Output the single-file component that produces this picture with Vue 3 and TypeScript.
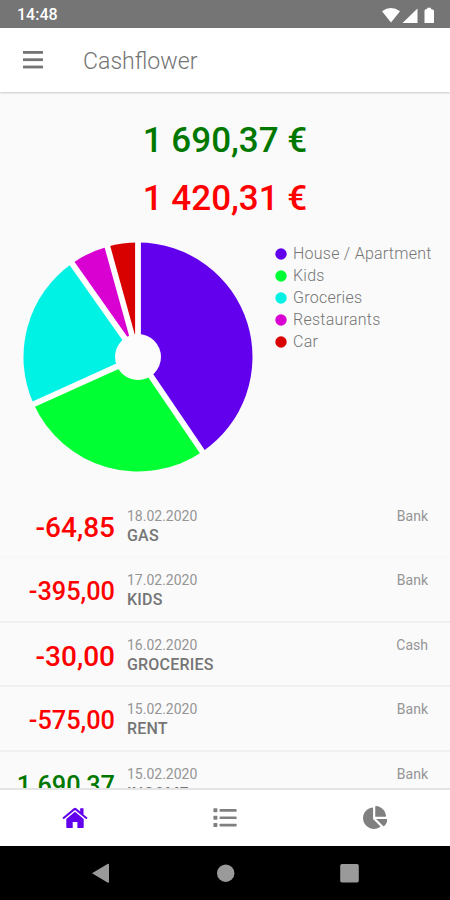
<script setup lang="ts">
interface Slice {
  label: string
  color: string
  start: number
  end: number
}

interface Entry {
  amount: string
  date: string
  title: string
  account: string
  income?: boolean
  compact?: boolean
}

const slices: Slice[] = [
  { label: 'House / Apartment', color: '#6200ee', start: 0, end: 145.8 },
  { label: 'Kids', color: '#00ff33', start: 145.8, end: 245.7 },
  { label: 'Groceries', color: '#00f2e4', start: 245.7, end: 324.8 },
  { label: 'Restaurants', color: '#d900d2', start: 324.8, end: 344.5 },
  { label: 'Car', color: '#d90000', start: 344.5, end: 360 },
]

const entries: Entry[] = [
  { amount: '-64,85', date: '18.02.2020', title: 'GAS', account: 'Bank' },
  { amount: '-395,00', date: '17.02.2020', title: 'KIDS', account: 'Bank', compact: true },
  { amount: '-30,00', date: '16.02.2020', title: 'GROCERIES', account: 'Cash' },
  { amount: '-575,00', date: '15.02.2020', title: 'RENT', account: 'Bank', compact: true },
  { amount: '1 690,37', date: '15.02.2020', title: 'INCOME', account: 'Bank', income: true, compact: true },
]

const radius = 114.5

function point(angle: number, r: number): string {
  const a = (angle * Math.PI) / 180
  return `${(r * Math.sin(a)).toFixed(2)} ${(-r * Math.cos(a)).toFixed(2)}`
}

function slicePath(s: Slice): string {
  const large = s.end - s.start > 180 ? 1 : 0
  return `M0 0L${point(s.start, radius)}A${radius} ${radius} 0 ${large} 1 ${point(s.end, radius)}Z`
}
</script>

<template>
  <div class="screen">
    <div class="status">
      <span class="clock">14:48</span>
      <svg class="status-icons" width="56" height="20" viewBox="0 0 56 20" fill="#fff">
        <path d="M0 4.2Q9-2.4 18 4.2L9 15.5Z" />
        <path d="M35.5 1.5V16H20.5Z" />
        <path d="M42.5 4Q42.5 2.5 44 2.3L45.2 2V.8H49V2L50.5 2.4Q52 2.6 52 4V16H42.5Z" />
      </svg>
    </div>

    <header class="bar">
      <svg class="menu" width="20" height="18" viewBox="0 0 20 18" fill="#757575">
        <rect y="0" width="20" height="2.8" />
        <rect y="7.3" width="20" height="2.8" />
        <rect y="14.6" width="20" height="2.8" />
      </svg>
      <h1>Cashflower</h1>
    </header>

    <main class="content">
      <div class="total income">1 690,37 €</div>
      <div class="total">1 420,31 €</div>

      <section class="overview">
        <svg class="pie" width="230" height="230" viewBox="-115 -115 230 230">
          <path v-for="s in slices" :key="s.label" :d="slicePath(s)" :fill="s.color" />
          <path
            v-for="s in slices"
            :key="'gap' + s.label"
            :d="`M0 0L${point(s.start, 115)}`"
            stroke="#fff"
            stroke-width="5.8"
          />
          <circle r="23" fill="#fcfcfc" />
        </svg>
        <ul class="legend">
          <li v-for="s in slices" :key="s.label">
            <svg width="12" height="12" viewBox="0 0 12 12"><circle cx="6" cy="6" r="5.7" :fill="s.color" /></svg>
            <span>{{ s.label }}</span>
          </li>
        </ul>
      </section>

      <section class="entries">
        <article v-for="(e, i) in entries" :key="i" class="entry">
          <div class="amount" :class="{ income: e.income, compact: e.compact }">{{ e.amount }}</div>
          <div class="details">
            <div class="date">{{ e.date }}</div>
            <div class="title">{{ e.title }}</div>
          </div>
          <div class="account">{{ e.account }}</div>
        </article>
      </section>
    </main>

    <nav class="tabs">
      <div class="tab">
        <svg width="26" height="22" viewBox="0 0 26 22" fill="#6200ee">
          <path d="M.4 10.7 11.8 1.2Q13 .3 14.2 1.2L18.2 4.6V1.3H21.5V7.4L25.6 10.7 24.3 12.3 13 3 1.7 12.3Z" />
          <path d="M4.3 12 13 4.8 21.7 12V20.2Q21.7 21 20.9 21H15.4V15H10.7V21H5.1Q4.3 21 4.3 20.2Z" />
        </svg>
      </div>
      <div class="tab">
        <svg width="24" height="20" viewBox="0 0 24 20" fill="#808080">
          <rect x=".4" y=".3" width="4" height="4" rx=".8" /><rect x="6.6" y="1.1" width="17" height="2.7" rx=".6" />
          <rect x=".4" y="7.7" width="4" height="4" rx=".8" /><rect x="6.6" y="8.4" width="17" height="2.7" rx=".6" />
          <rect x=".4" y="15" width="4" height="4" rx=".8" /><rect x="6.6" y="15.7" width="17" height="2.7" rx=".6" />
        </svg>
      </div>
      <div class="tab stats">
        <svg width="24.5" height="23" viewBox="0 0 544 512" fill="#808080">
          <path d="M527.79 288H290.5l158.03 158.03c6.04 6.04 15.98 6.53 22.19.68 38.7-36.46 65.32-85.61 73.13-140.86 1.34-9.46-6.51-17.85-16.06-17.85zm-15.83-64.8C503.72 103.74 408.26 8.28 288.8.04 279.68-.59 272 7.1 272 16.24V240h223.77c9.14 0 16.82-7.68 16.19-16.8zM224 288V50.71c0-9.55-8.39-17.4-17.84-16.06C86.99 51.49-4.1 155.6.14 280.37 4.5 408.51 114.83 513.59 243.03 511.98c50.4-.63 96.97-16.87 135.26-44.03 7.9-5.6 8.42-17.23 1.57-24.08L224 288z" />
        </svg>
      </div>
    </nav>

    <footer class="system">
      <svg width="450" height="54" viewBox="0 0 450 54" fill="#9a9a9a">
        <path d="M92 27.2 107.5 18Q109 17.2 109 19V35.5Q109 37.3 107.5 36.4Z" />
        <circle cx="225.7" cy="27.2" r="8.7" />
        <rect x="340.2" y="18" width="18.6" height="18.6" rx="1.8" />
      </svg>
    </footer>
  </div>
</template>

<style>
body {
  margin: 0;
  background: #fafafa;
}
</style>

<style scoped>
.screen {
  display: flex;
  flex-direction: column;
  width: 450px;
  height: 900px;
  overflow: hidden;
  background: #fafafa;
  color: #757575;
  font-family: Roboto, 'Liberation Sans', sans-serif;
}

.status {
  display: flex;
  flex: none;
  align-items: center;
  justify-content: space-between;
  box-sizing: border-box;
  height: 28px;
  padding: 2px 12px 0 17px;
  background: #757575;
  color: #fff;
}

.clock {
  font-size: 16px;
  font-weight: 500;
  line-height: 20px;
}

.status-icons {
  margin-top: 3px;
}

.bar {
  display: flex;
  flex: none;
  align-items: center;
  gap: 40px;
  height: 64px;
  padding-left: 23px;
  background: #fff;
  box-shadow: 0 1px 2px rgba(0, 0, 0, 0.2);
}

.bar h1 {
  margin: 4px 0 0;
  font-size: 23.1px;
  font-weight: 300;
  line-height: 30px;
}

.content {
  flex: 1;
  min-height: 0;
  padding-top: 20px;
  overflow: hidden;
}

.total {
  height: 58px;
  color: #f00;
  font-size: 35px;
  font-weight: 500;
  line-height: 58px;
  text-align: center;
}

.total.income,
.amount.income {
  color: #007800;
}

.overview {
  display: flex;
  align-items: flex-start;
  gap: 22px;
  height: 230px;
  padding: 13.5px 0 0 23px;
}

.pie {
  flex: none;
}

.legend {
  margin: 1px 0 0;
  padding: 0;
  list-style: none;
}

.legend li {
  display: flex;
  align-items: center;
  gap: 6px;
  height: 22px;
  font-size: 16px;
  font-weight: 300;
  letter-spacing: 0.25px;
  line-height: 22px;
  white-space: nowrap;
}

.legend span {
  padding-top: 1px;
}

.entries {
  padding-top: 22px;
}

.entry {
  display: grid;
  grid-template-columns: 115px 1fr auto;
  column-gap: 12px;
  box-sizing: border-box;
  height: 64.6px;
  padding: 12px 22px 0 0;
  border-bottom: 2px solid #f0f0f0;
}

.entry:first-child {
  border-bottom-color: #f7f7f7;
}

.amount {
  padding-top: 2px;
  color: #f00;
  font-size: 28px;
  font-weight: 500;
  line-height: 40px;
  text-align: right;
  white-space: nowrap;
}

.amount.compact {
  font-size: 25.3px;
}

.date,
.account {
  color: #959595;
  font-size: 14px;
  font-weight: 400;
  line-height: 20px;
}

.title {
  font-size: 16px;
  font-weight: 500;
  letter-spacing: 0.2px;
  line-height: 20px;
}

.tabs {
  display: grid;
  flex: none;
  grid-template-columns: repeat(3, 1fr);
  box-sizing: border-box;
  height: 58px;
  border-top: 2px solid #e4e4e4;
  background: #fff;
}

.tab {
  display: flex;
  align-items: center;
  justify-content: center;
}

.tab.stats {
  padding-bottom: 2px;
}

.system {
  flex: none;
  height: 54px;
  background: #000;
}
</style>
